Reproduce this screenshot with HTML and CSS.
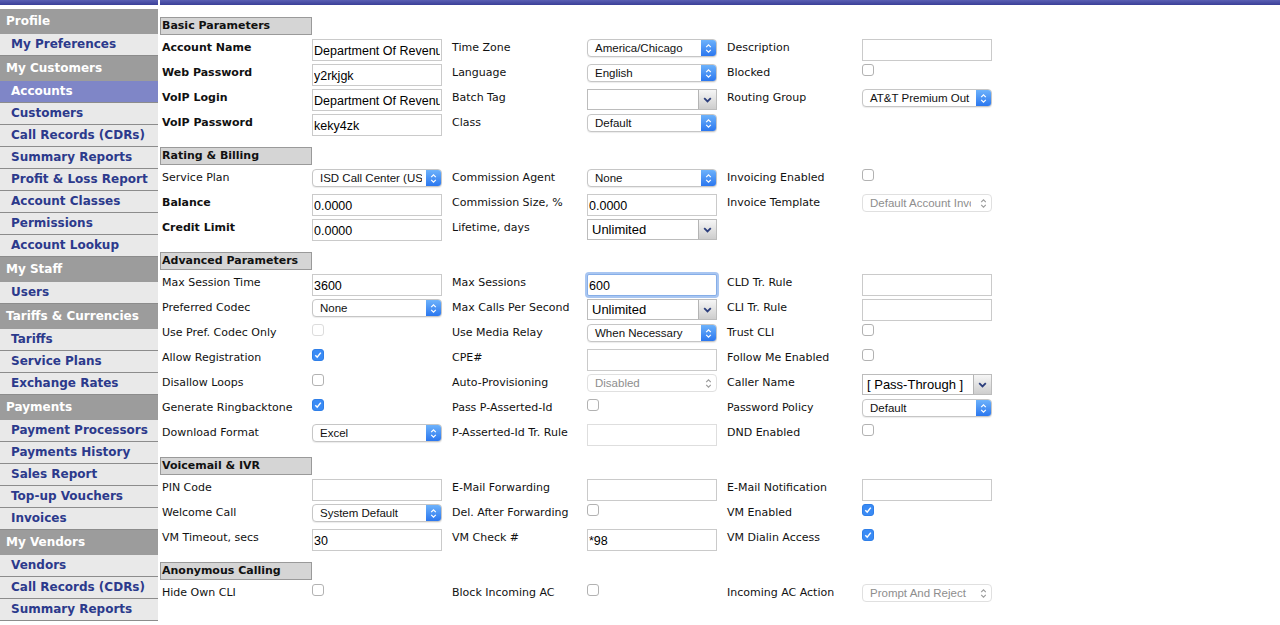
FILE: index.html
```html
<!DOCTYPE html>
<html>
<head>
<meta charset="utf-8">
<title>Account</title>
<link rel="stylesheet" href="styles.css">
</head>
<body>
<div class="page">
  <nav class="side">
    <div class="side-top"></div>
    <div class="sh">Profile</div>
    <div class="si">My Preferences</div>
    <div class="sh">My Customers</div>
    <div class="si active">Accounts</div>
    <div class="si">Customers</div>
    <div class="si">Call Records (CDRs)</div>
    <div class="si">Summary Reports</div>
    <div class="si">Profit &amp; Loss Report</div>
    <div class="si">Account Classes</div>
    <div class="si">Permissions</div>
    <div class="si">Account Lookup</div>
    <div class="sh">My Staff</div>
    <div class="si">Users</div>
    <div class="sh">Tariffs &amp; Currencies</div>
    <div class="si">Tariffs</div>
    <div class="si">Service Plans</div>
    <div class="si">Exchange Rates</div>
    <div class="sh">Payments</div>
    <div class="si">Payment Processors</div>
    <div class="si">Payments History</div>
    <div class="si">Sales Report</div>
    <div class="si">Top-up Vouchers</div>
    <div class="si">Invoices</div>
    <div class="sh">My Vendors</div>
    <div class="si">Vendors</div>
    <div class="si">Call Records (CDRs)</div>
    <div class="si">Summary Reports</div>
  </nav>

  <main class="main">
    <div class="main-top"></div>

    <section class="sec first">
      <div class="sec-h">Basic Parameters</div>
      <div class="grid">
        <div class="l b">Account Name</div>
        <div class="f"><input class="txt" type="text" value="Department Of Revenue"></div>
        <div class="l">Time Zone</div>
        <div class="f"><div class="ms"><span class="v">America/Chicago</span><span class="btn"><svg width="7" height="11" viewBox="0 0 7 11"><path d="M1.2 4.2 L3.5 1.8 L5.8 4.2 M1.2 6.8 L3.5 9.2 L5.8 6.8" fill="none" stroke="#fff" stroke-width="1.2"/></svg></span></div></div>
        <div class="l">Description</div>
        <div class="f"><input class="txt" type="text" value=""></div>

        <div class="l b">Web Password</div>
        <div class="f"><input class="txt" type="text" value="y2rkjgk"></div>
        <div class="l">Language</div>
        <div class="f"><div class="ms"><span class="v">English</span><span class="btn"><svg width="7" height="11" viewBox="0 0 7 11"><path d="M1.2 4.2 L3.5 1.8 L5.8 4.2 M1.2 6.8 L3.5 9.2 L5.8 6.8" fill="none" stroke="#fff" stroke-width="1.2"/></svg></span></div></div>
        <div class="l">Blocked</div>
        <div class="f"><span class="cb"></span></div>

        <div class="l b">VoIP Login</div>
        <div class="f"><input class="txt" type="text" value="Department Of Revenue"></div>
        <div class="l">Batch Tag</div>
        <div class="f"><div class="gs"><span class="v"></span><span class="btn"><svg width="9" height="6" viewBox="0 0 9 6"><path d="M1.2 1.2 L4.5 4.5 L7.8 1.2" fill="none" stroke="#2b3d7c" stroke-width="1.8"/></svg></span></div></div>
        <div class="l">Routing Group</div>
        <div class="f"><div class="ms"><span class="v">AT&amp;T Premium Out</span><span class="btn"><svg width="7" height="11" viewBox="0 0 7 11"><path d="M1.2 4.2 L3.5 1.8 L5.8 4.2 M1.2 6.8 L3.5 9.2 L5.8 6.8" fill="none" stroke="#fff" stroke-width="1.2"/></svg></span></div></div>

        <div class="l b">VoIP Password</div>
        <div class="f"><input class="txt" type="text" value="keky4zk"></div>
        <div class="l">Class</div>
        <div class="f"><div class="ms"><span class="v">Default</span><span class="btn"><svg width="7" height="11" viewBox="0 0 7 11"><path d="M1.2 4.2 L3.5 1.8 L5.8 4.2 M1.2 6.8 L3.5 9.2 L5.8 6.8" fill="none" stroke="#fff" stroke-width="1.2"/></svg></span></div></div>
        <div class="l"></div>
        <div class="f"></div>
      </div>
    </section>

    <section class="sec">
      <div class="sec-h">Rating &amp; Billing</div>
      <div class="grid">
        <div class="l">Service Plan</div>
        <div class="f"><div class="ms"><span class="v">ISD Call Center (USA)</span><span class="btn"><svg width="7" height="11" viewBox="0 0 7 11"><path d="M1.2 4.2 L3.5 1.8 L5.8 4.2 M1.2 6.8 L3.5 9.2 L5.8 6.8" fill="none" stroke="#fff" stroke-width="1.2"/></svg></span></div></div>
        <div class="l">Commission Agent</div>
        <div class="f"><div class="ms"><span class="v">None</span><span class="btn"><svg width="7" height="11" viewBox="0 0 7 11"><path d="M1.2 4.2 L3.5 1.8 L5.8 4.2 M1.2 6.8 L3.5 9.2 L5.8 6.8" fill="none" stroke="#fff" stroke-width="1.2"/></svg></span></div></div>
        <div class="l">Invoicing Enabled</div>
        <div class="f"><span class="cb"></span></div>

        <div class="l b">Balance</div>
        <div class="f"><input class="txt" type="text" value="0.0000"></div>
        <div class="l">Commission Size, %</div>
        <div class="f"><input class="txt" type="text" value="0.0000"></div>
        <div class="l">Invoice Template</div>
        <div class="f"><div class="ms dis"><span class="v">Default Account Invoice</span><span class="btn"><svg width="7" height="11" viewBox="0 0 7 11"><path d="M1.2 4.2 L3.5 1.8 L5.8 4.2 M1.2 6.8 L3.5 9.2 L5.8 6.8" fill="none" stroke="#9a9a9a" stroke-width="1.1"/></svg></span></div></div>

        <div class="l b">Credit Limit</div>
        <div class="f"><input class="txt" type="text" value="0.0000"></div>
        <div class="l">Lifetime, days</div>
        <div class="f"><div class="gs"><span class="v">Unlimited</span><span class="btn"><svg width="9" height="6" viewBox="0 0 9 6"><path d="M1.2 1.2 L4.5 4.5 L7.8 1.2" fill="none" stroke="#2b3d7c" stroke-width="1.8"/></svg></span></div></div>
        <div class="l"></div>
        <div class="f"></div>
      </div>
    </section>

    <section class="sec">
      <div class="sec-h">Advanced Parameters</div>
      <div class="grid">
        <div class="l">Max Session Time</div>
        <div class="f"><input class="txt" type="text" value="3600"></div>
        <div class="l">Max Sessions</div>
        <div class="f"><input class="txt focus" type="text" value="600"></div>
        <div class="l">CLD Tr. Rule</div>
        <div class="f"><input class="txt" type="text" value=""></div>

        <div class="l">Preferred Codec</div>
        <div class="f"><div class="ms"><span class="v">None</span><span class="btn"><svg width="7" height="11" viewBox="0 0 7 11"><path d="M1.2 4.2 L3.5 1.8 L5.8 4.2 M1.2 6.8 L3.5 9.2 L5.8 6.8" fill="none" stroke="#fff" stroke-width="1.2"/></svg></span></div></div>
        <div class="l">Max Calls Per Second</div>
        <div class="f"><div class="gs"><span class="v">Unlimited</span><span class="btn"><svg width="9" height="6" viewBox="0 0 9 6"><path d="M1.2 1.2 L4.5 4.5 L7.8 1.2" fill="none" stroke="#2b3d7c" stroke-width="1.8"/></svg></span></div></div>
        <div class="l">CLI Tr. Rule</div>
        <div class="f"><input class="txt" type="text" value=""></div>

        <div class="l">Use Pref. Codec Only</div>
        <div class="f"><span class="cb dis"></span></div>
        <div class="l">Use Media Relay</div>
        <div class="f"><div class="ms"><span class="v">When Necessary</span><span class="btn"><svg width="7" height="11" viewBox="0 0 7 11"><path d="M1.2 4.2 L3.5 1.8 L5.8 4.2 M1.2 6.8 L3.5 9.2 L5.8 6.8" fill="none" stroke="#fff" stroke-width="1.2"/></svg></span></div></div>
        <div class="l">Trust CLI</div>
        <div class="f"><span class="cb"></span></div>

        <div class="l">Allow Registration</div>
        <div class="f"><span class="cb on"><svg width="10" height="10" viewBox="0 0 10 10"><path d="M2.3 5.2 L4.2 7.2 L7.8 2.6" fill="none" stroke="#fff" stroke-width="1.5"/></svg></span></div>
        <div class="l">CPE#</div>
        <div class="f"><input class="txt" type="text" value=""></div>
        <div class="l">Follow Me Enabled</div>
        <div class="f"><span class="cb"></span></div>

        <div class="l">Disallow Loops</div>
        <div class="f"><span class="cb"></span></div>
        <div class="l">Auto-Provisioning</div>
        <div class="f"><div class="ms dis"><span class="v">Disabled</span><span class="btn"><svg width="7" height="11" viewBox="0 0 7 11"><path d="M1.2 4.2 L3.5 1.8 L5.8 4.2 M1.2 6.8 L3.5 9.2 L5.8 6.8" fill="none" stroke="#9a9a9a" stroke-width="1.1"/></svg></span></div></div>
        <div class="l">Caller Name</div>
        <div class="f"><div class="gs"><span class="v">[ Pass-Through ]</span><span class="btn"><svg width="9" height="6" viewBox="0 0 9 6"><path d="M1.2 1.2 L4.5 4.5 L7.8 1.2" fill="none" stroke="#2b3d7c" stroke-width="1.8"/></svg></span></div></div>

        <div class="l">Generate Ringbacktone</div>
        <div class="f"><span class="cb on"><svg width="10" height="10" viewBox="0 0 10 10"><path d="M2.3 5.2 L4.2 7.2 L7.8 2.6" fill="none" stroke="#fff" stroke-width="1.5"/></svg></span></div>
        <div class="l">Pass P-Asserted-Id</div>
        <div class="f"><span class="cb"></span></div>
        <div class="l">Password Policy</div>
        <div class="f"><div class="ms"><span class="v">Default</span><span class="btn"><svg width="7" height="11" viewBox="0 0 7 11"><path d="M1.2 4.2 L3.5 1.8 L5.8 4.2 M1.2 6.8 L3.5 9.2 L5.8 6.8" fill="none" stroke="#fff" stroke-width="1.2"/></svg></span></div></div>

        <div class="l">Download Format</div>
        <div class="f"><div class="ms"><span class="v">Excel</span><span class="btn"><svg width="7" height="11" viewBox="0 0 7 11"><path d="M1.2 4.2 L3.5 1.8 L5.8 4.2 M1.2 6.8 L3.5 9.2 L5.8 6.8" fill="none" stroke="#fff" stroke-width="1.2"/></svg></span></div></div>
        <div class="l">P-Asserted-Id Tr. Rule</div>
        <div class="f"><input class="txt dis" type="text" value="" disabled></div>
        <div class="l">DND Enabled</div>
        <div class="f"><span class="cb"></span></div>
      </div>
    </section>

    <section class="sec">
      <div class="sec-h">Voicemail &amp; IVR</div>
      <div class="grid">
        <div class="l">PIN Code</div>
        <div class="f"><input class="txt" type="text" value=""></div>
        <div class="l">E-Mail Forwarding</div>
        <div class="f"><input class="txt" type="text" value=""></div>
        <div class="l">E-Mail Notification</div>
        <div class="f"><input class="txt" type="text" value=""></div>

        <div class="l">Welcome Call</div>
        <div class="f"><div class="ms"><span class="v">System Default</span><span class="btn"><svg width="7" height="11" viewBox="0 0 7 11"><path d="M1.2 4.2 L3.5 1.8 L5.8 4.2 M1.2 6.8 L3.5 9.2 L5.8 6.8" fill="none" stroke="#fff" stroke-width="1.2"/></svg></span></div></div>
        <div class="l">Del. After Forwarding</div>
        <div class="f"><span class="cb"></span></div>
        <div class="l">VM Enabled</div>
        <div class="f"><span class="cb on"><svg width="10" height="10" viewBox="0 0 10 10"><path d="M2.3 5.2 L4.2 7.2 L7.8 2.6" fill="none" stroke="#fff" stroke-width="1.5"/></svg></span></div>

        <div class="l">VM Timeout, secs</div>
        <div class="f"><input class="txt" type="text" value="30"></div>
        <div class="l">VM Check #</div>
        <div class="f"><input class="txt" type="text" value="*98"></div>
        <div class="l">VM Dialin Access</div>
        <div class="f"><span class="cb on"><svg width="10" height="10" viewBox="0 0 10 10"><path d="M2.3 5.2 L4.2 7.2 L7.8 2.6" fill="none" stroke="#fff" stroke-width="1.5"/></svg></span></div>
      </div>
    </section>

    <section class="sec">
      <div class="sec-h">Anonymous Calling</div>
      <div class="grid">
        <div class="l">Hide Own CLI</div>
        <div class="f"><span class="cb"></span></div>
        <div class="l">Block Incoming AC</div>
        <div class="f"><span class="cb"></span></div>
        <div class="l">Incoming AC Action</div>
        <div class="f"><div class="ms dis"><span class="v">Prompt And Reject</span><span class="btn"><svg width="7" height="11" viewBox="0 0 7 11"><path d="M1.2 4.2 L3.5 1.8 L5.8 4.2 M1.2 6.8 L3.5 9.2 L5.8 6.8" fill="none" stroke="#9a9a9a" stroke-width="1.1"/></svg></span></div></div>
      </div>
    </section>
  </main>
</div>
</body>
</html>
```

FILE: styles.css
```css
html, body {
  margin: 0;
  padding: 0;
  background: #ffffff;
}

body {
  font-family: "DejaVu Sans", Verdana, sans-serif;
  font-size: 11px;
  color: #111111;
  overflow: hidden;
}

.page {
  display: flex;
  align-items: flex-start;
  height: 625px;
}

/* Sidebar */
.side {
  width: 158px;
  flex: none;
}

.side-top {
  height: 5px;
  background: linear-gradient(#5a5fb3, #3a3f98);
  margin-bottom: 4px;
}

.sh {
  height: 25px;
  line-height: 25px;
  background: #9c9c9c;
  color: #ffffff;
  font-weight: bold;
  font-size: 12px;
  padding-left: 6px;
  white-space: nowrap;
}

.si {
  height: 21px;
  line-height: 21px;
  border-bottom: 1px solid #8c8c8c;
  background: #e9e9e9;
  color: #2c3a8c;
  font-weight: bold;
  font-size: 12px;
  padding-left: 11px;
  white-space: nowrap;
}

.si.active {
  background: #7f86c7;
  color: #ffffff;
}

/* Main */
.main {
  flex: 1;
  margin-left: 2px;
}

.main-top {
  height: 5px;
  background: linear-gradient(#5a5fb3, #3a3f98);
}

.sec {
  margin-top: 10px;
}

.sec.first {
  margin-top: 12px;
}

.sec-h {
  width: 149px;
  height: 16px;
  line-height: 16px;
  border: 1px solid #9a9a9a;
  background: #d5d5d5;
  font-weight: bold;
  color: #111111;
  padding-left: 1px;
  margin-bottom: 2px;
  white-space: nowrap;
}

.grid {
  display: grid;
  grid-template-columns: 152px 138px 137px 138px 137px 140px;
  grid-auto-rows: 25px;
}

.l {
  padding: 4px 0 0 2px;
  line-height: 13px;
  white-space: nowrap;
}

.l.b {
  font-weight: bold;
}

.f {
  padding-top: 2px;
}

/* Text input */
.txt {
  display: block;
  box-sizing: border-box;
  width: 130px;
  height: 22px;
  margin: 0;
  border: 1px solid #cacaca;
  border-radius: 0;
  padding: 2px 1px 0 1px;
  font-family: "Liberation Sans", Arial, sans-serif;
  font-size: 12.5px;
  color: #000000;
  background: #ffffff;
  outline: none;
}

.txt.focus {
  border-color: #86aee8;
  box-shadow: 0 0 0 2px #a9c6f1;
  border-radius: 2px;
}

.txt.dis {
  border-color: #dedede;
  background: #ffffff;
}

/* Mac-style select */
.ms {
  display: flex;
  box-sizing: border-box;
  width: 130px;
  height: 18px;
  border: 1px solid #c6c6c6;
  border-radius: 4px;
  background: #ffffff;
  box-shadow: 0 1px 1px rgba(0, 0, 0, 0.08);
  font-family: "Liberation Sans", Arial, sans-serif;
  font-size: 11.5px;
  color: #111111;
  overflow: hidden;
}

.ms .v {
  flex: 1;
  min-width: 0;
  padding-left: 7px;
  margin-right: 4px;
  line-height: 16px;
  white-space: nowrap;
  overflow: hidden;
}

.ms .btn {
  width: 15px;
  flex: none;
  display: flex;
  align-items: center;
  justify-content: center;
  background: linear-gradient(#6db2fb, #2b77ef);
}

.ms.dis {
  border-color: #e0e0e0;
  color: #8e8e8e;
  box-shadow: none;
}

.ms.dis .btn {
  background: transparent;
  width: 16px;
}

/* Grey-button select */
.gs {
  display: flex;
  box-sizing: border-box;
  width: 130px;
  height: 21px;
  border: 1px solid #bcbcbc;
  background: #ffffff;
  font-family: "Liberation Sans", Arial, sans-serif;
  font-size: 13px;
  color: #000000;
}

.gs .v {
  flex: 1;
  min-width: 0;
  padding-left: 4px;
  line-height: 19px;
  white-space: nowrap;
  overflow: hidden;
}

.gs .btn {
  width: 17px;
  flex: none;
  display: flex;
  align-items: center;
  justify-content: center;
  border-left: 1px solid #b4b4b4;
  background: linear-gradient(#f6f6f6, #cdcdcd);
}

/* Checkbox */
.cb {
  display: flex;
  align-items: center;
  justify-content: center;
  box-sizing: border-box;
  width: 12px;
  height: 12px;
  border: 1px solid #b2b2b2;
  border-radius: 3px;
  background: #ffffff;
}

.cb.on {
  background: #3a8bf5;
  border-color: #2f7fe8;
}

.cb.dis {
  border-color: #dcdcdc;
}
```
